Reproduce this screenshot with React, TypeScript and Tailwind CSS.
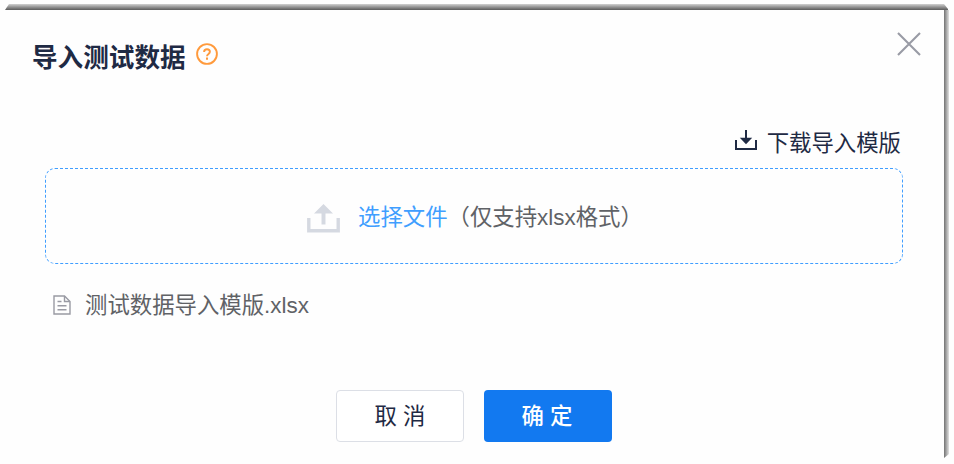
import React from "react";

function HelpIcon() {
  return (
    <svg width="22" height="22" viewBox="0 0 22 22" fill="none" stroke="#ff9a3c" className="ml-[10px] mt-[7px] shrink-0">
      <circle cx="11" cy="11" r="9.9" strokeWidth="1.9" />
      <path d="M8.1 9C8.1 7.2 9.3 6.2 11 6.2S13.9 7.2 13.9 8.8C13.9 10.9 11 10.9 11 13.3" strokeWidth="1.9" />
      <path d="M11 14.6V16.7" strokeWidth="2" />
    </svg>
  );
}

function CloseIcon() {
  return (
    <svg width="24" height="24" viewBox="0 0 24 24" fill="none" stroke="#999ba5" strokeWidth="2.1" className="block">
      <path d="M1 1L23 23M23 1L1 23" />
    </svg>
  );
}

function DownloadIcon() {
  return (
    <svg width="22" height="20" viewBox="0 0 22 20" className="mr-[10px] mt-[7px] shrink-0">
      <path d="M1 10V19H21V10" fill="none" stroke="#1f2a44" strokeWidth="2" />
      <path d="M10 0H12V7.8H17.2L11 14.2L4.8 7.8H10Z" fill="#1f2a44" />
    </svg>
  );
}

function UploadIcon() {
  return (
    <svg width="33" height="29" viewBox="0 0 33 29" className="mr-[18px] shrink-0">
      <path d="M1.8 14V26.7H31.2V14" fill="none" stroke="#d5d9e1" strokeWidth="3.4" />
      <path d="M16.5 0L26 9.5H18.5V20.5H14.5V9.5H7Z" fill="#d5d9e1" />
    </svg>
  );
}

function FileIcon() {
  return (
    <svg width="18" height="20" viewBox="0 0 18 20" fill="none" stroke="#999aa3" strokeWidth="1.4" className="-mt-[2px] mr-[14px] shrink-0">
      <path d="M1 1H11.5L17 6.5V19H1Z" />
      <path d="M11.5 1V6.5H17M4.5 6.5H8.5M4.5 10.7H13.5M4.5 14.8H13.5" />
    </svg>
  );
}

export default function App() {
  return (
    <div className="flex h-[464px] w-[954px] flex-col overflow-hidden bg-[#fefefe] pt-1 font-['Liberation_Sans','Noto_Sans_CJK_SC',sans-serif]">
      <div className="ml-[5px] h-[6px] w-[944px] shrink-0 bg-linear-to-b from-[#d2d2d2] to-[#5c5c5c] [clip-path:polygon(4px_0,calc(100%-5px)_0,calc(100%-1px)_5px,calc(100%-1px)_100%,0_100%)]" />
      <div className="flex h-[454px]">
        <main className="flex w-[944px] shrink-0 flex-col">
          <header className="flex h-[111px] justify-between pl-8 pr-[23px]">
            <div className="flex pt-[26px]">
              <h1 className="whitespace-nowrap text-[25.6px] font-bold leading-[44px] text-[#1f2a44]">导入测试数据</h1>
              <HelpIcon />
            </div>
            <button className="mt-[22px] h-6 w-6" aria-label="关闭"><CloseIcon /></button>
          </header>
          <div className="flex h-[47px] justify-end pr-[43px] pt-[2px] text-[22.4px] leading-[42px] text-[#1f2a44]">
            <DownloadIcon />
            <span>下载导入模版</span>
          </div>
          <section className="ml-[45px] h-[96px] w-[858px] shrink-0">
            <div className="flex h-full items-center rounded-[10px] border border-dashed border-[#409eff] pl-[261px] pt-[4px] text-[22.4px] leading-8 text-[#606266]">
              <UploadIcon />
              <span className="whitespace-nowrap"><span className="text-[#409eff]">选择文件</span>（仅支持xlsx格式）</span>
            </div>
          </section>
          <div className="ml-[53px] mt-[24px] flex h-9 items-center text-[22.4px] text-[#606266]">
            <FileIcon />
            <span>测试数据导入模版.xlsx</span>
          </div>
          <footer className="mt-[66px] flex gap-5 pl-[336px] text-[22.4px]">
            <button className="h-[52px] w-32 whitespace-pre rounded border border-[#dcdfe6] bg-white pt-px text-[#1f2a44]">取 消</button>
            <button className="h-[52px] w-32 whitespace-pre rounded bg-[#1279f0] pr-[2px] pt-px font-medium text-white">确 定</button>
          </footer>
        </main>
        <div className="h-[448px] w-[5px] bg-linear-to-r from-[#737373] to-[#e2e2e2] [clip-path:polygon(0_0,100%_0,100%_calc(100%-4px),0_100%)]" />
      </div>
    </div>
  );
}
